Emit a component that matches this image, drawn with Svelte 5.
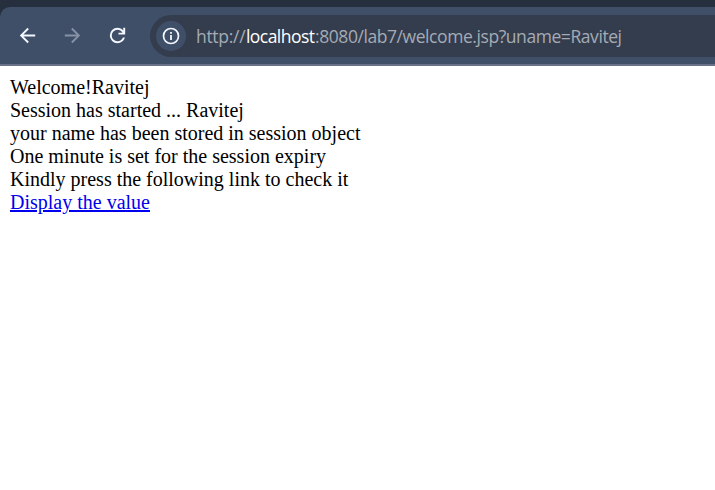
<script>
  const scheme = 'http://';
  const host = 'localhost';
  const path = ':8080/lab7/welcome.jsp?uname=Ravitej';
  const lines = [
    'Welcome!Ravitej',
    'Session has started ... Ravitej',
    'your name has been stored in session object',
    'One minute is set for the session expiry',
    'Kindly press the following link to check it'
  ];
</script>

<div class="window">
  <div class="toolbar">
    <nav>
      <svg class="icon" viewBox="0 0 24 24" aria-label="Back"><path d="M20 11H7.8l5.6-5.6L12 4l-8 8 8 8 1.4-1.4L7.8 13H20z" /></svg>
      <svg class="icon off" viewBox="0 0 24 24" aria-label="Forward"><path d="M4 13h12.2l-5.6 5.6L12 20l8-8-8-8-1.4 1.4 5.6 5.6H4z" /></svg>
      <svg class="icon" viewBox="0 0 24 24" aria-label="Reload"><path d="M12 20q-3.35 0-5.675-2.325T4 12t2.325-5.675T12 4q1.725 0 3.3.712T18 6.75V4h2v7h-7V9h4.2q-.8-1.4-2.187-2.2T12 6Q9.5 6 7.75 7.75T6 12t1.75 4.25T12 18q1.925 0 3.475-1.1T17.65 14h2.1q-.7 2.65-2.85 4.325T12 20" /></svg>
    </nav>
    <div class="address">
      <span class="info">
        <svg viewBox="0 0 18 18" aria-label="Site information">
          <circle cx="9" cy="9" r="7.5" fill="none" stroke="#f3f7ff" stroke-width="1.7" />
          <path d="M8.1 8h1.8v5H8.1zM8.1 5h1.8v1.8H8.1z" />
        </svg>
      </span>
      <span class="url"><span class="scheme">{scheme}</span><span class="host">{host}</span><span class="path">{path}</span></span>
    </div>
  </div>
  <main>
    {#each lines as line}
      <div>{line}</div>
    {/each}
    <a href="#value">Display the value</a>
  </main>
</div>

<style>
  :global(body) {
    margin: 0;
    background: #fff;
  }
  .window {
    height: 490px;
    overflow: hidden;
    background: linear-gradient(#262f3e 0 20px, #fff 20px);
    padding-top: 7px;
    box-sizing: border-box;
  }
  .toolbar {
    box-sizing: border-box;
    height: 59px;
    display: flex;
    align-items: center;
    padding: 0 0 0 16px;
    background: #404f68;
    border-bottom: 2px solid #6a708a;
    border-top-left-radius: 10px;
  }
  nav {
    display: flex;
    gap: 22px;
    width: 134px;
  }
  .icon {
    width: 23px;
    height: 23px;
    fill: #f3f7ff;
    flex: none;
  }
  .off {
    fill: #8792a5;
  }
  .address {
    flex: 1;
    height: 42px;
    display: flex;
    align-items: center;
    box-sizing: border-box;
    padding-left: 6px;
    background: #343d4d;
    border-radius: 21px 0 0 21px;
  }
  .info {
    width: 30px;
    height: 30px;
    border-radius: 50%;
    background: #404f68;
    display: grid;
    place-items: center;
  }
  .info svg {
    width: 18px;
    height: 18px;
    fill: #f3f7ff;
  }
  .url {
    display: flex;
    margin-left: 10px;
    font: 17.5px/24px "Open Sans", "Noto Sans", sans-serif;
    color: #a5abb5;
    white-space: pre;
  }
  .scheme {
    width: 50px;
    letter-spacing: -0.3px;
  }
  .host {
    width: 69px;
    color: #fff;
    letter-spacing: -0.55px;
  }
  .path {
    letter-spacing: -0.43px;
  }
  main {
    padding: 10px;
    font: 20px/23px "Liberation Serif", "Times New Roman", serif;
    color: #000;
  }
  a {
    color: #0000ee;
    text-decoration: underline;
  }
</style>
